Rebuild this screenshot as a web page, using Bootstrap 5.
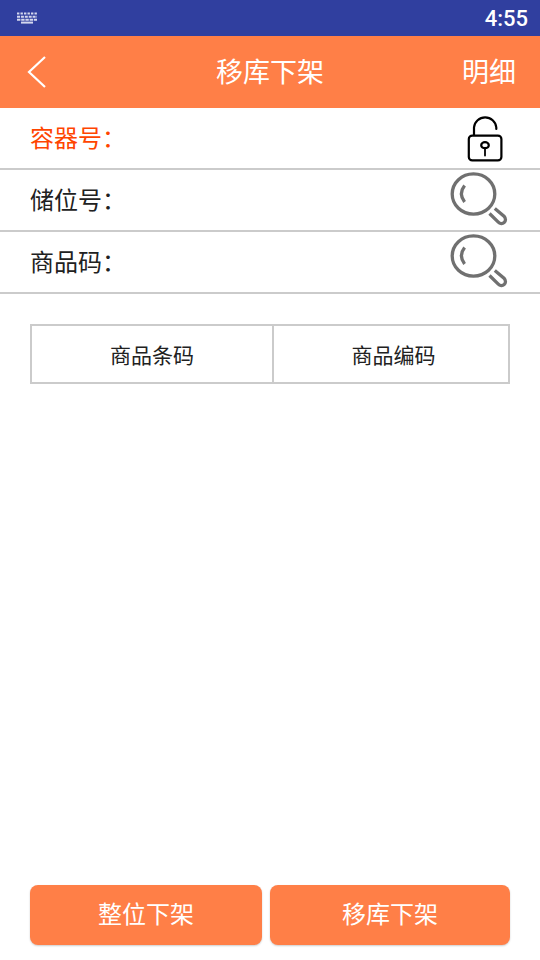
<!DOCTYPE html>
<html lang="zh-CN">
<head>
<meta charset="utf-8">
<meta name="viewport" content="width=device-width, initial-scale=1">
<title>移库下架</title>
<link href="https://cdn.jsdelivr.net/npm/bootstrap@5.3.0/dist/css/bootstrap.min.css" rel="stylesheet">
<style>
  body { font-family: "Noto Sans CJK SC", sans-serif; color: #212121; background: #fff; }
  .status-bar { height: 36px; background: #303f9f; padding: 0 12px 0 16px; }
  .clock { font: 500 22px/36px Roboto, sans-serif; padding-top: 2px; }
  .title-bar { height: 72px; background: #ff7f47; padding: 0 24px; }
  .title-bar h1, .title-bar a { font-size: 27px; line-height: 40px; font-weight: 400; padding-bottom: 2px; }
  .back-btn { width: 54px; }
  .back-btn svg, .icon-btn svg { display: block; }
  .field-row { height: 62px; border-bottom: 2px solid #cbcbcb; padding: 0 30px; }
  .field-row label { font-size: 24px; line-height: 36px; padding-bottom: 2px; }
  .field-row input { font-size: 24px; min-width: 0; outline: 0; }
  .active-field { color: #ff4500; }
  .goods-area { padding: 30px; }
  .goods-table { border: 2px solid #cbcbcb; border-collapse: separate; border-spacing: 0; table-layout: fixed; }
  .goods-table th { height: 56px; font-size: 21px; line-height: 32px; font-weight: 400; padding-bottom: 2px; }
  .goods-table th:first-child { width: 50.8%; border-right: 2px solid #cbcbcb; }
  .goods-table th:last-child { padding-left: 6px; }
  .actions { padding: 0 30px 15px; }
  .action-btn { height: 60px; border-radius: 8px; background: #ff7f47; font-size: 24px; line-height: 36px; box-shadow: 0 1px 2px rgba(0, 0, 0, .2); }
</style>
<script defer src="https://cdn.jsdelivr.net/npm/bootstrap@5.3.0/dist/js/bootstrap.bundle.min.js"></script>
</head>
<body class="d-flex flex-column min-vh-100">
  <div class="status-bar d-flex align-items-center justify-content-between text-white">
    <svg width="22" height="14" viewBox="0 0 22 14" fill="none" stroke="#d3d7ee" stroke-width="2" aria-hidden="true">
      <path d="M1 2.5h20" stroke-dasharray="2.4 1.1"/>
      <path d="M1 5.7h20" stroke-dasharray="3 .9"/>
      <path d="M1 8.7h20" stroke-dasharray="3.4 .8"/>
      <path d="M5 11.6h12"/>
    </svg>
    <span class="clock">4:55</span>
  </div>

  <header class="title-bar d-flex align-items-center justify-content-between text-white">
    <button type="button" class="back-btn btn p-0 border-0 rounded-0 text-white" aria-label="返回">
      <svg width="24" height="36" viewBox="0 0 24 36" fill="none" stroke="currentColor" stroke-width="2.2" aria-hidden="true"><path d="M21 3 5 18l16 15"/></svg>
    </button>
    <h1 class="m-0">移库下架</h1>
    <a href="#" class="text-white text-decoration-none">明细</a>
  </header>

  <main class="flex-grow-1">
    <form>
      <div class="field-row active-field d-flex align-items-center">
        <label for="container-no">容器号：</label>
        <input id="container-no" type="text" class="flex-grow-1 border-0 bg-transparent p-0">
        <button type="button" class="icon-btn btn p-0 border-0 rounded-0" aria-label="锁定">
          <svg width="50" height="56" viewBox="0 0 50 56" fill="none" stroke="#000" stroke-width="2.2" stroke-linecap="round" aria-hidden="true">
            <rect x="8.8" y="25.6" width="32.6" height="24.8" rx="3.5"/>
            <path d="M14 25V17.500a11.200 11.200 0 0 1 22.300 0V19"/>
            <ellipse cx="25" cy="35.2" rx="3.800" ry="3"/>
            <path d="M25 38.500v7" stroke-width="1.800"/>
          </svg>
        </button>
      </div>
      <div class="field-row d-flex align-items-center">
        <label for="location-no">储位号：</label>
        <input id="location-no" type="text" class="flex-grow-1 border-0 bg-transparent p-0">
        <button type="button" class="icon-btn btn p-0 border-0 rounded-0" aria-label="查询储位">
          <svg width="60" height="60" viewBox="0 0 60 60" fill="none" stroke="#707070" stroke-width="3.300" aria-hidden="true">
            <ellipse cx="23.500" cy="24" rx="21.300" ry="20.200"/>
            <path d="M14.600 15.600q-6.400 8.200 0 16.400"/>
            <path d="M39.500 43.500 48 51.800c4 4.400 10.400-.6 6-5.600L44.800 38.500"/>
          </svg>
        </button>
      </div>
      <div class="field-row d-flex align-items-center">
        <label for="goods-code">商品码：</label>
        <input id="goods-code" type="text" class="flex-grow-1 border-0 bg-transparent p-0">
        <button type="button" class="icon-btn btn p-0 border-0 rounded-0" aria-label="查询商品">
          <svg width="60" height="60" viewBox="0 0 60 60" fill="none" stroke="#707070" stroke-width="3.300" aria-hidden="true">
            <ellipse cx="23.500" cy="24" rx="21.300" ry="20.200"/>
            <path d="M14.600 15.600q-6.400 8.200 0 16.400"/>
            <path d="M39.500 43.500 48 51.800c4 4.400 10.400-.6 6-5.600L44.800 38.500"/>
          </svg>
        </button>
      </div>
    </form>

    <div class="goods-area">
      <table class="goods-table w-100 text-center align-middle">
        <thead>
          <tr><th scope="col">商品条码</th><th scope="col">商品编码</th></tr>
        </thead>
      </table>
    </div>
  </main>

  <footer class="actions d-flex">
    <div class="w-50 pe-2"><button type="button" class="action-btn btn w-100 p-0 pb-1 border-0 text-white">整位下架</button></div>
    <div class="w-50"><button type="button" class="action-btn btn w-100 p-0 pb-1 border-0 text-white">移库下架</button></div>
  </footer>
</body>
</html>
